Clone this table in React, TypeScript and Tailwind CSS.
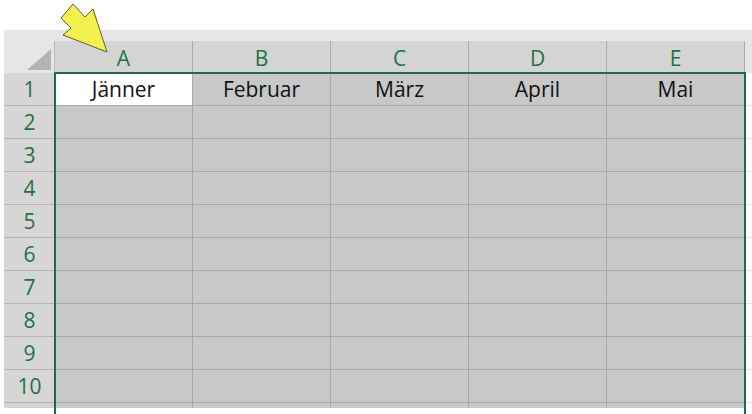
const cols = ["A", "B", "C", "D", "E"];
const months = ["Jänner", "Februar", "März", "April", "Mai"];
const rows = [1, 2, 3, 4, 5, 6, 7, 8, 9, 10];

function Arrow() {
  // yellow block arrow pointing down-right at column A
  return (
    <svg
      className="absolute left-0 top-0"
      width="140"
      height="70"
      viewBox="0 0 140 70"
    >
      <polygon
        points="61,18 73,4 85,17 93,9 107,52 63,35 71,28"
        fill="#f2f24e"
        stroke="#5e5e26"
        strokeWidth="1"
        strokeLinejoin="miter"
      />
    </svg>
  );
}

export default function App() {
  return (
    <div
      className="relative w-[752px] h-[414px] overflow-hidden bg-white"
      style={{ fontFamily: '"Open Sans", "Liberation Sans", sans-serif' }}
    >
      <div className="h-[30px]" />
      <div className="ml-[4px] h-[11px] bg-[#e6e6e6]" />

      <div className="ml-[4px] grid grid-cols-[51px_138px_138px_138px_138px_138px_1fr]">
        {/* corner */}
        <div className="relative h-[32px] bg-[#e6e6e6] border-r border-[#bdbdbd]">
          <div className="absolute right-[3px] bottom-[3px] w-0 h-0 [border-bottom:21px_solid_#b3b3b3] [border-left:24px_solid_transparent]" />
        </div>
        {cols.map((c) => (
          <div
            key={c}
            className="h-[32px] bg-[#d4d4d4] border-r border-[#ababab] flex items-center justify-center text-[21px] text-[#217346] leading-none pt-[2px]"
          >
            {c}
          </div>
        ))}
        <div className="h-[32px] bg-[#e6e6e6]" />

        {rows.map((r) => (
          <RowCells key={r} r={r} />
        ))}

        <div className="h-[5px] bg-[#d4d4d4] border-r border-[#ababab]" />
        {cols.map((c) => (
          <div key={c} className="h-[5px] bg-[#c8c8c8] border-r border-[#ababab]" />
        ))}
        <div className="h-[5px] bg-white" />
      </div>

      {/* selection border */}
      <div className="absolute left-[54px] top-[72px] w-[692px] h-[360px] border-2 border-[#1f6b45]" />

      <Arrow />
    </div>
  );
}

function RowCells({ r }: { r: number }) {
  return (
    <>
      <div className="h-[33px] bg-[#d6d6d6] border-b border-[#b4b4b4] flex items-center justify-center text-[21px] text-[#2b6c4a] leading-none pt-[1px]">
        {r}
      </div>
      {cols.map((c, i) => (
        <div
          key={c}
          className={
            r === 1 && i === 0
              ? "h-[33px] bg-white border-b border-r border-[#ababab] flex items-center justify-center text-[21px] text-[#111] leading-none pt-[1px]"
              : "h-[33px] bg-[#c8c8c8] border-b border-r border-[#a8a8a8] flex items-center justify-center text-[21px] text-[#111] leading-none pt-[1px]"
          }
        >
          {r === 1 ? months[i] : ""}
        </div>
      ))}
      <div className="h-[33px] bg-white border-b border-[#e4e4e4]" />
    </>
  );
}
